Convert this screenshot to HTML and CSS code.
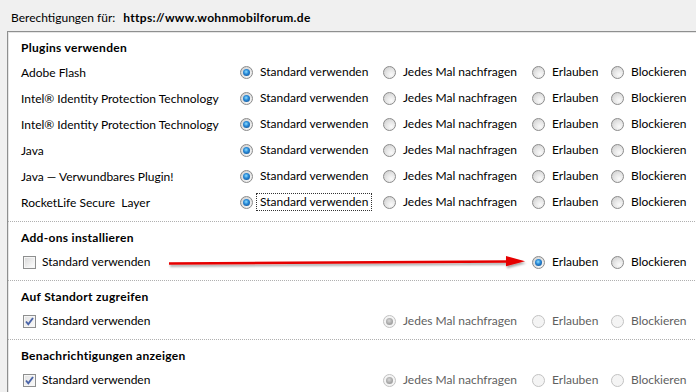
FILE: index.html
```html
<!DOCTYPE html>
<html lang="de">
<head>
    <meta charset="UTF-8">
    <title>Berechtigungen</title>
    <link rel="stylesheet" href="styles.css">
</head>
<body>
    <div class="header">
        <span>Berechtigungen für:</span>
        <strong>https://www.wohnmobilforum.de</strong>
    </div>

    <div class="panel">
        <div class="section plugins">
            <h2>Plugins verwenden</h2>
            <div class="row">
                <div class="name">Adobe Flash</div>
                <label class="opt"><span class="radio on"></span><span class="txt">Standard verwenden</span></label>
                <label class="opt"><span class="radio"></span><span class="txt">Jedes Mal nachfragen</span></label>
                <label class="opt"><span class="radio"></span><span class="txt">Erlauben</span></label>
                <label class="opt"><span class="radio"></span><span class="txt">Blockieren</span></label>
            </div>
            <div class="row">
                <div class="name">Intel® Identity Protection Technology</div>
                <label class="opt"><span class="radio on"></span><span class="txt">Standard verwenden</span></label>
                <label class="opt"><span class="radio"></span><span class="txt">Jedes Mal nachfragen</span></label>
                <label class="opt"><span class="radio"></span><span class="txt">Erlauben</span></label>
                <label class="opt"><span class="radio"></span><span class="txt">Blockieren</span></label>
            </div>
            <div class="row">
                <div class="name">Intel® Identity Protection Technology</div>
                <label class="opt"><span class="radio on"></span><span class="txt">Standard verwenden</span></label>
                <label class="opt"><span class="radio"></span><span class="txt">Jedes Mal nachfragen</span></label>
                <label class="opt"><span class="radio"></span><span class="txt">Erlauben</span></label>
                <label class="opt"><span class="radio"></span><span class="txt">Blockieren</span></label>
            </div>
            <div class="row">
                <div class="name">Java</div>
                <label class="opt"><span class="radio on"></span><span class="txt">Standard verwenden</span></label>
                <label class="opt"><span class="radio"></span><span class="txt">Jedes Mal nachfragen</span></label>
                <label class="opt"><span class="radio"></span><span class="txt">Erlauben</span></label>
                <label class="opt"><span class="radio"></span><span class="txt">Blockieren</span></label>
            </div>
            <div class="row">
                <div class="name">Java — Verwundbares Plugin!</div>
                <label class="opt"><span class="radio on"></span><span class="txt">Standard verwenden</span></label>
                <label class="opt"><span class="radio"></span><span class="txt">Jedes Mal nachfragen</span></label>
                <label class="opt"><span class="radio"></span><span class="txt">Erlauben</span></label>
                <label class="opt"><span class="radio"></span><span class="txt">Blockieren</span></label>
            </div>
            <div class="row">
                <div class="name">RocketLife Secure&nbsp; Layer</div>
                <label class="opt"><span class="radio on"></span><span class="txt focus">Standard verwenden</span></label>
                <label class="opt"><span class="radio"></span><span class="txt">Jedes Mal nachfragen</span></label>
                <label class="opt"><span class="radio"></span><span class="txt">Erlauben</span></label>
                <label class="opt"><span class="radio"></span><span class="txt">Blockieren</span></label>
            </div>
        </div>

        <div class="section">
            <h2>Add-ons installieren</h2>
            <div class="row">
                <label class="name default"><span class="check"></span><span class="txt">Standard verwenden</span></label>
                <div></div>
                <div></div>
                <label class="opt"><span class="radio on"></span><span class="txt">Erlauben</span></label>
                <label class="opt"><span class="radio"></span><span class="txt">Blockieren</span></label>
            </div>
            <!-- red arrow drawn over the screenshot -->
            <svg class="arrow" width="370" height="20" viewBox="0 0 370 20">
                <defs>
                    <filter id="shadow" x="-5%" y="-50%" width="110%" height="250%">
                        <feDropShadow dx="1" dy="2" stdDeviation="1.2" flood-color="#000" flood-opacity="0.35"/>
                    </filter>
                </defs>
                <g filter="url(#shadow)">
                    <path d="M4 10.5 L343 8.5" stroke="#e60000" stroke-width="2.6" fill="none"/>
                    <path d="M341 3 L360 8.3 L341 13.3 Z" fill="#e60000"/>
                </g>
            </svg>
        </div>

        <div class="section">
            <h2>Auf Standort zugreifen</h2>
            <div class="row">
                <label class="name default"><span class="check on"><svg width="11" height="11" viewBox="0 0 11 11"><path d="M2 5.5 L4.3 8.3 L9 2" stroke="#4a64a8" stroke-width="1.9" fill="none"/></svg></span><span class="txt">Standard verwenden</span></label>
                <div></div>
                <label class="opt off"><span class="radio on"></span><span class="txt">Jedes Mal nachfragen</span></label>
                <label class="opt off"><span class="radio"></span><span class="txt">Erlauben</span></label>
                <label class="opt off"><span class="radio"></span><span class="txt">Blockieren</span></label>
            </div>
        </div>

        <div class="section">
            <h2>Benachrichtigungen anzeigen</h2>
            <div class="row">
                <label class="name default"><span class="check on"><svg width="11" height="11" viewBox="0 0 11 11"><path d="M2 5.5 L4.3 8.3 L9 2" stroke="#4a64a8" stroke-width="1.9" fill="none"/></svg></span><span class="txt">Standard verwenden</span></label>
                <div></div>
                <label class="opt off"><span class="radio on"></span><span class="txt">Jedes Mal nachfragen</span></label>
                <label class="opt off"><span class="radio"></span><span class="txt">Erlauben</span></label>
                <label class="opt off"><span class="radio"></span><span class="txt">Blockieren</span></label>
            </div>
        </div>
    </div>
</body>
</html>
```

FILE: styles.css
```css
* {
    margin: 0;
    padding: 0;
    box-sizing: border-box;
}

body {
    font-family: Lato, 'Open Sans', sans-serif;
    font-size: 12px;
    color: #000;
    background: #f0f0f0;
    width: 696px;
    height: 392px;
    overflow: hidden;
}

.header {
    height: 31px;
    padding: 3px 0 0 11px;
    display: flex;
    align-items: center;
    gap: 8px;
}

.header strong {
    font-weight: 700;
    letter-spacing: 0.3px;
}

.panel {
    margin-left: 7px;
    width: 700px;
    background: #fff;
    border-top: 1px solid #8e8f8f;
    border-left: 1px solid #8e8f8f;
    box-shadow: inset 1px 1px 0 #e6e6e6;
}

.section {
    padding: 7px 0 5px 13px;
    border-bottom: 1px dotted #b0b0b0;
    position: relative;
}

.section.plugins {
    padding-bottom: 6px;
}

.section h2 {
    font-size: 12px;
    font-weight: 700;
    letter-spacing: 0.3px;
    line-height: 18px;
    margin-bottom: 2px;
}

.row {
    display: grid;
    grid-template-columns: 219px 143px 149px 79px 1fr;
    align-items: center;
    height: 26px;
}

.name {
    white-space: nowrap;
}

.opt,
.default {
    display: flex;
    align-items: center;
    white-space: nowrap;
}

.txt {
    padding: 0 3px;
    border: 1px solid transparent;
    line-height: 16px;
}

.opt .txt {
    margin-left: 3px;
}

.txt.focus {
    border: 1px dotted #333;
}

.radio {
    width: 13px;
    height: 13px;
    border-radius: 50%;
    border: 1px solid #8b8b8b;
    background: radial-gradient(circle at 65% 70%, #fafafa 0, #e6e6e6 45%, #c8c8c8 100%);
    position: relative;
    flex: none;
}

.radio.on::after {
    content: '';
    position: absolute;
    left: 2px;
    top: 2px;
    width: 7px;
    height: 7px;
    border-radius: 50%;
    background: radial-gradient(circle at 45% 40%, #8fe0ff 0, #2a8ad8 40%, #0a4583 100%);
}

.off .txt {
    color: #5f5f5f;
}

.off .radio {
    border-color: #c2c2c2;
    background: #f4f4f4;
}

.off .radio.on::after {
    background: radial-gradient(circle at 45% 40%, #d8d8d8 0, #a8a8a8 55%, #8a8a8a 100%);
}

.check {
    width: 13px;
    height: 13px;
    margin-left: 2px;
    border: 1px solid #8e8f8f;
    background: linear-gradient(135deg, #d6d6d6 0, #f4f4f4 70%, #fff 100%);
    box-shadow: inset 0 0 0 1px #f6f6f6;
    display: flex;
    align-items: center;
    justify-content: center;
    flex: none;
}

.check.on {
    background: linear-gradient(135deg, #e2e2e2 0, #fafafa 100%);
}

.default .txt {
    margin-left: 2px;
}

.arrow {
    position: absolute;
    left: 157px;
    top: 31px;
}
```
